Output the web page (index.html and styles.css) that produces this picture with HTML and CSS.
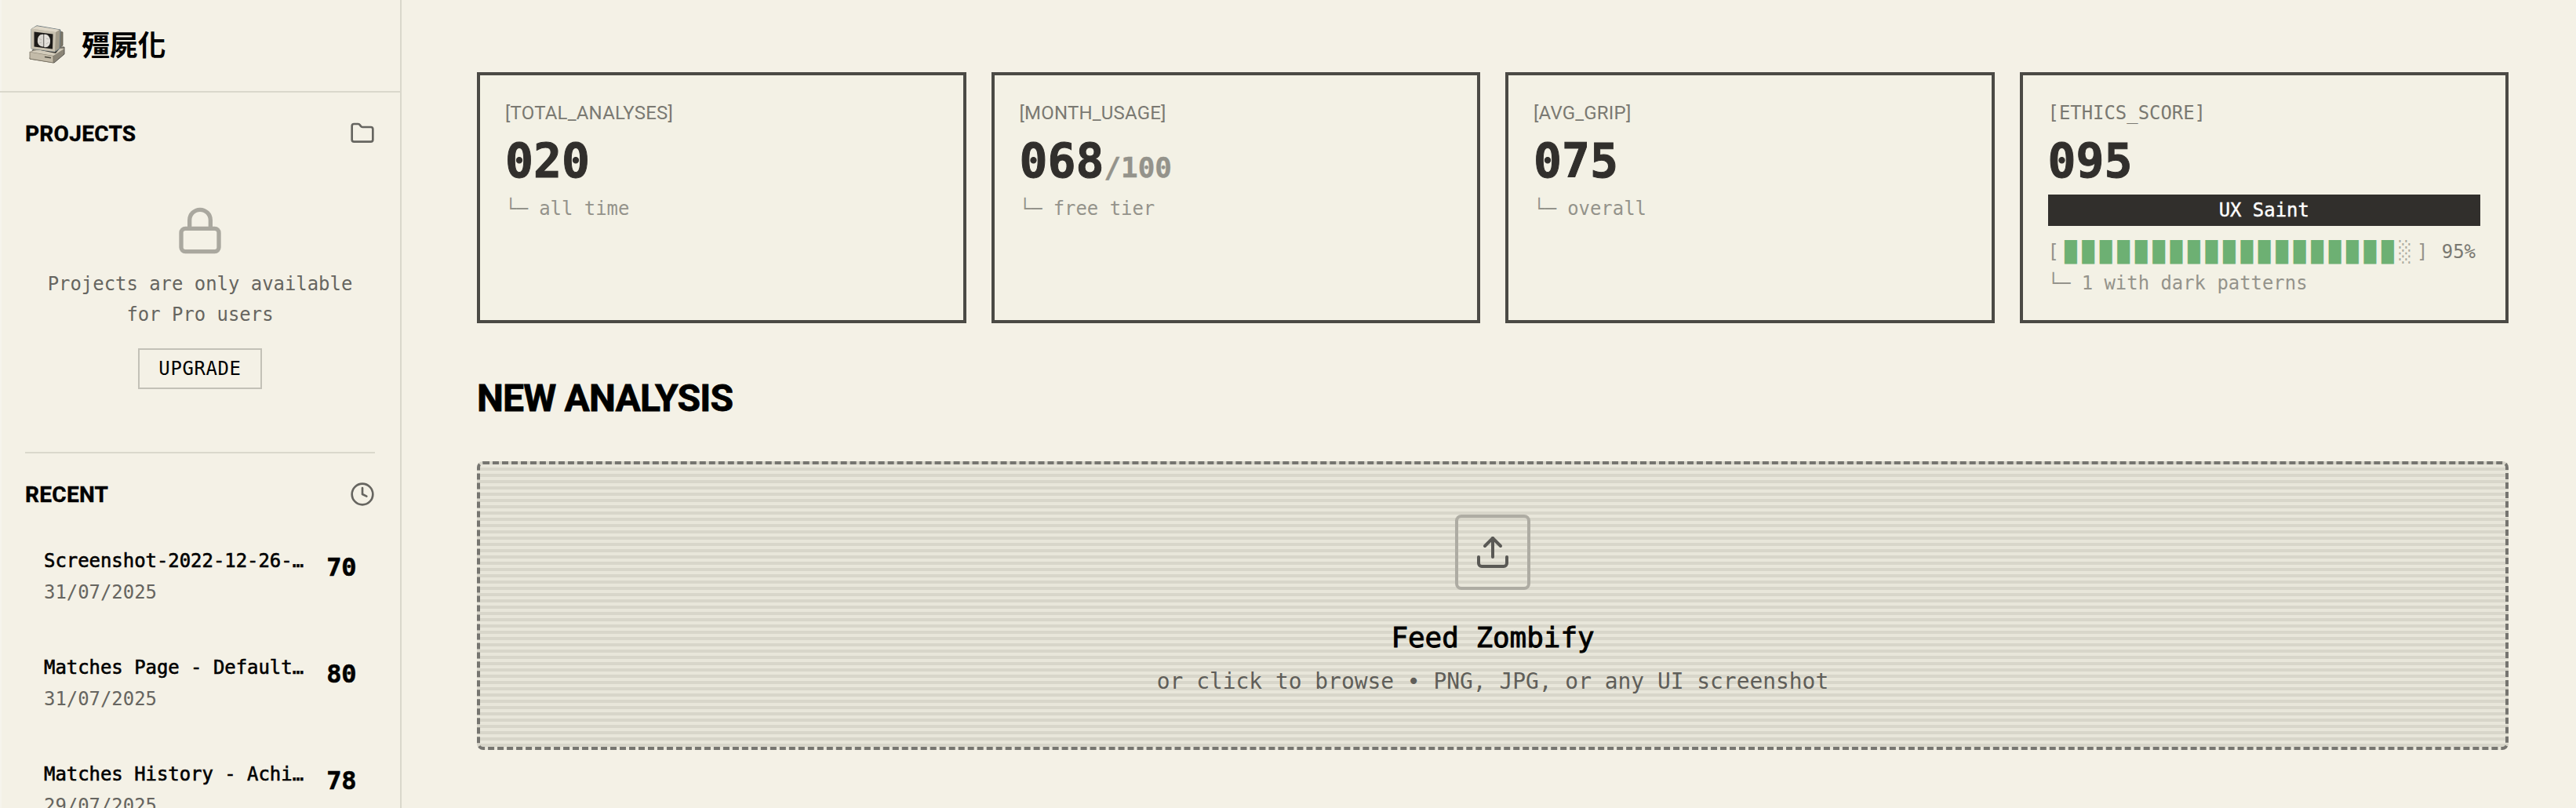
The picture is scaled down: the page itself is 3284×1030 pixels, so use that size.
FILE: index.html
```html
<!DOCTYPE html>
<html lang="en">
<head>
<meta charset="utf-8">
<title>Zombify</title>
<link rel="stylesheet" href="styles.css">
</head>
<body>
<div class="app">
  <aside class="sidebar">
    <header class="brand">
      <svg class="brand-logo" viewBox="0 0 46 49" width="46" height="49">
        <path d="M3 34 L8 28 L45 28 L45 37 L32 48 L1 43 Z" fill="#8b8577" stroke="#56544f" stroke-width="1"/>
        <path d="M1 34 L31 39 L31 48 L1 43 Z" fill="#c3bba9" stroke="#77705f" stroke-width=".8"/>
        <path d="M1 34 L14 31 L45 30 L31 39 Z" fill="#d3ccbb"/>
        <path d="M20 40.5 L28 41.8" stroke="#4c493f" stroke-width="1.6"/>
        <path d="M36 7 L43 9 L43 26 L36 30 Z" fill="#7b7668" stroke="#5b584e" stroke-width=".8"/>
        <path d="M10 31 L34 36 L38 31 Z" fill="#37332d"/>
        <path d="M3 5 L10 .8 L40 6 L39 30 L33 34 L3 30 Z" fill="#a29b8a" stroke="#6c7a80" stroke-width="1"/>
        <path d="M3 4.5 L34 9 L33 34 L3 30 Z" fill="#c8c1b0"/>
        <path d="M3 4.5 L10 1.2 L39 6 L34 9 Z" fill="#ded7c7"/>
        <path d="M6.5 8.5 L30.5 11.5 L30 30.5 L6.5 27.5 Z" fill="#1d1b19"/>
        <path d="M18.5 12 C14 11 11 15 11 19 C10 24 14 28 18.5 27.5 Z" fill="#d9d6d0"/>
        <path d="M19.2 12 C24 11 27 16 27 20 C27 26 24 29 19.2 28 Z" fill="#e3e0da"/>
        <path d="M13 17 l3 2 M13 23 l3 -1 M22 17 l3 1 M22 24 l3 -2" stroke="#b5b1a9" stroke-width=".8"/>
      </svg>
      <span class="brand-name">殭屍化</span>
    </header>
    <div class="sidebar-body">
      <section class="projects">
        <div class="section-head">
          <h2 class="section-title">PROJECTS</h2>
          <svg class="icon" viewBox="0 0 24 24" width="32" height="32"><path d="M20 20a2 2 0 0 0 2-2V8a2 2 0 0 0-2-2h-7.9a2 2 0 0 1-1.69-.9L9.6 3.9A2 2 0 0 0 7.93 3H4a2 2 0 0 0-2 2v13a2 2 0 0 0 2 2Z"/></svg>
        </div>
        <div class="locked">
          <svg class="icon lock" viewBox="0 0 24 24" width="64" height="64"><rect x="3" y="11" width="18" height="11" rx="2"/><path d="M7 11V7a5 5 0 0 1 10 0v4"/></svg>
          <p class="locked-text">Projects are only available<br>for Pro users</p>
          <button class="upgrade">UPGRADE</button>
        </div>
      </section>
      <section class="recent">
        <div class="section-head">
          <h2 class="section-title">RECENT</h2>
          <svg class="icon" viewBox="0 0 24 24" width="32" height="32"><circle cx="12" cy="12" r="10"/><path d="M12 6v6l4 2"/></svg>
        </div>
        <ul class="recent-list">
          <li class="recent-item"><div><div class="recent-name">Screenshot-2022-12-26-…</div><div class="recent-date">31/07/2025</div></div><span class="recent-score">70</span></li>
          <li class="recent-item"><div><div class="recent-name">Matches Page - Default…</div><div class="recent-date">31/07/2025</div></div><span class="recent-score">80</span></li>
          <li class="recent-item"><div><div class="recent-name">Matches History - Achi…</div><div class="recent-date">29/07/2025</div></div><span class="recent-score">78</span></li>
        </ul>
      </section>
    </div>
  </aside>
  <main class="main">
    <div class="stats">
      <div class="card"><div class="label">[TOTAL_ANALYSES]</div><div class="value">020</div><div class="note">└─ all time</div></div>
      <div class="card"><div class="label">[MONTH_USAGE]</div><div class="value">068<span class="limit">/100</span></div><div class="note">└─ free tier</div></div>
      <div class="card"><div class="label">[AVG_GRIP]</div><div class="value">075</div><div class="note">└─ overall</div></div>
      <div class="card">
        <div class="label label-mono">[ETHICS_SCORE]</div>
        <div class="value">095</div>
        <div class="badge">UX Saint</div>
        <div class="meter"><span>[</span><span class="blocks">███████████████████<span class="empty">░</span></span><span>]</span><span class="percent">95%</span></div>
        <div class="note note-ethics">└─ 1 with dark patterns</div>
      </div>
    </div>
    <h1 class="heading">NEW ANALYSIS</h1>
    <div class="dropzone">
      <div class="upload-box"><svg class="icon" viewBox="0 0 24 24" width="48" height="48"><path d="M21 15v4a2 2 0 0 1-2 2H5a2 2 0 0 1-2-2v-4"/><path d="M17 8l-5-5-5 5"/><path d="M12 3v12"/></svg></div>
      <div class="drop-title">Feed Zombify</div>
      <div class="drop-hint">or click to browse • PNG, JPG, or any UI screenshot</div>
    </div>
  </main>
</div>
</body>
</html>
```
FILE: styles.css
```css
* { box-sizing: border-box; margin: 0; padding: 0; }
body {
  background: #f4f1e6;
  color: #000;
  font-family: "DejaVu Sans Mono", monospace;
  font-size: 23.92px;
  line-height: 40px;
  overflow: hidden;
}
.app { display: flex; height: 1030px; overflow: hidden; }
.icon { fill: none; stroke: #666560; stroke-width: 2; stroke-linecap: round; stroke-linejoin: round; display: block; flex: none; }

.sidebar { width: 512px; flex: none; border-right: 2px solid #dad8cc; box-shadow: inset 2px 0 #f6f4ed; }
.brand { height: 118px; display: flex; align-items: flex-start; gap: 21px; padding: 32px 0 0 37px; border-bottom: 2px solid #dad8cc; }
.brand-name { font: 700 36px/46px "Noto Sans CJK TC", sans-serif; letter-spacing: -.3px; }
.sidebar-body { padding: 32px 32px 0; }
.section-head { display: flex; justify-content: space-between; align-items: center; height: 40px; }
.section-title { font: 700 28px/41px Roboto, sans-serif; letter-spacing: .3px; -webkit-text-stroke: .4px #000; }
.projects { height: 428px; border-bottom: 2px solid #dad8cc; }
.locked { display: flex; flex-direction: column; align-items: center; padding-top: 72px; }
.lock { stroke: #aaa89f; }
.locked-text { margin-top: 17px; line-height: 39px; text-align: center; color: #666560; }
.upgrade { margin-top: 23px; height: 52px; padding: 0 24px; border: 2px solid #c3c1b7; background: none; font: 23.92px/48px "DejaVu Sans Mono", monospace; letter-spacing: .65px; color: #000; }
.recent { padding-top: 32px; }
.recent-list { list-style: none; padding: 40px 24px 0; }
.recent-item { display: flex; justify-content: space-between; height: 136px; padding-top: 5px; }
.recent-name { -webkit-text-stroke: .6px #000; }
.recent-date { color: #666560; }
.recent-score { font-weight: 700; font-size: 32px; letter-spacing: -.4px; line-height: 56px; -webkit-text-stroke: .6px #000; }

.main { flex: 1; padding: 92px 86px 0 96px; }
.stats { display: grid; grid-template-columns: repeat(4, 1fr); gap: 32px; }
.card { height: 320px; border: 4px solid #4b4a45; padding: 28px 32px 0; background: #f3f1e5; }
.label { height: 40px; color: #7a7972; white-space: nowrap; font-family: Roboto, sans-serif; font-size: 24px; letter-spacing: .2px; }
.label-mono { font-family: "DejaVu Sans Mono", monospace; font-size: 23.92px; line-height: 41px; letter-spacing: 0; }
.value { font-size: 59.8px; line-height: 60px; font-weight: 700; color: #312f2c; margin-top: 11px; height: 63px; -webkit-text-stroke: 1px #312f2c; }
.limit { font-size: 35.9px; color: #94938b; -webkit-text-stroke: .5px #94938b; }
.note { color: #94938b; margin-top: 8px; }
.badge { background: #312f2c; color: #fff; text-align: center; height: 40px; margin-top: 10px; -webkit-text-stroke: .4px #fff; }
.meter { display: flex; height: 40px; margin-top: 13px; color: #94938b; }
.blocks { font-size: 25.8px; letter-spacing: 6.92px; color: #6db073; margin-left: 7px; white-space: nowrap; }
.empty { color: #aaa89f; }
.percent { color: #7a7972; margin-left: auto; padding-right: 6px; }
.note-ethics { margin-top: 0; }
.heading { font: 700 48px/60px Roboto, sans-serif; letter-spacing: -.8px; -webkit-text-stroke: .8px #000; margin-top: 66px; }
.dropzone {
  margin-top: 50px; height: 368px; border: 4px dashed #767570; border-radius: 8px;
  display: flex; flex-direction: column; align-items: center; padding-top: 64px;
  background: repeating-linear-gradient(#e8e6da 0 4px, #d8d6ca 4px 8px);
}
.upload-box { width: 96px; height: 96px; border: 4px solid #aeaca3; border-radius: 8px; display: grid; place-items: center; }
.upload-box .icon { stroke: #5a5955; }
.drop-title { font-size: 35.88px; line-height: 56px; margin-top: 33px; -webkit-text-stroke: .9px #000; }
.drop-hint { font-size: 27.9px; line-height: 44px; color: #5f5e59; margin-top: 6px; }
```
